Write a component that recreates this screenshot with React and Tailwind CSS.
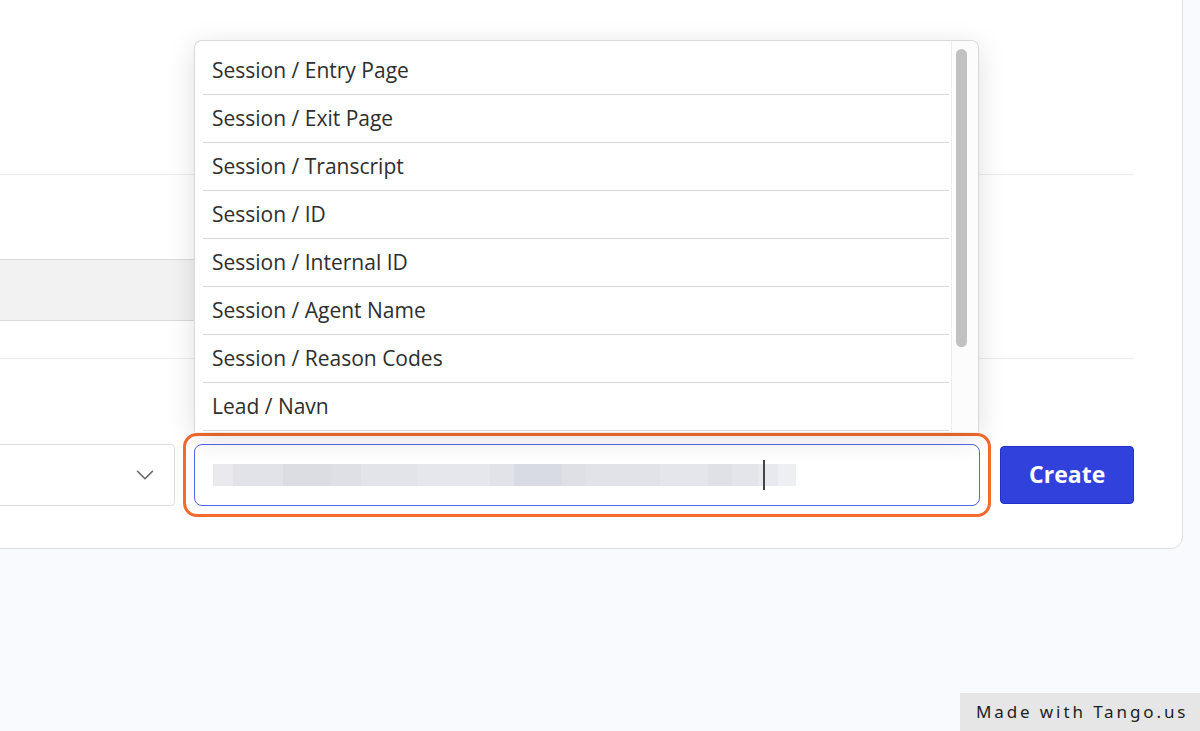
import { ChevronDown } from "lucide-react";

const OPTIONS = [
  "Session / Entry Page",
  "Session / Exit Page",
  "Session / Transcript",
  "Session / ID",
  "Session / Internal ID",
  "Session / Agent Name",
  "Session / Reason Codes",
  "Lead / Navn",
  "Lead / Telefon",
];

// blurred (redacted) text inside the focused input
const BLUR = [
  ["w-[20px]", "bg-[#eaeaee]"],
  ["w-[50px]", "bg-[#e2e3e8]"],
  ["w-[48px]", "bg-[#dcdde3]"],
  ["w-[30px]", "bg-[#dfe0e6]"],
  ["w-[56px]", "bg-[#e3e4ea]"],
  ["w-[73px]", "bg-[#e6e7ec]"],
  ["w-[24px]", "bg-[#e2e3e9]"],
  ["w-[48px]", "bg-[#d9dbe2]"],
  ["w-[24px]", "bg-[#dfe0e6]"],
  ["w-[74px]", "bg-[#e2e3e9]"],
  ["w-[48px]", "bg-[#e5e6eb]"],
  ["w-[24px]", "bg-[#e0e1e7]"],
  ["w-[26px]", "bg-[#e4e5ea]"],
  ["w-[20px]", "bg-[#e8e9ee]"],
  ["w-[18px]", "bg-[#eeeff3]"],
];

function Dropdown() {
  return (
    <div className="absolute left-[194px] top-[40px] flex h-[392px] w-[785px] overflow-hidden rounded-t-[8px] border border-b-0 border-[#d9d9dc] bg-white shadow-[0_6px_28px_rgba(0,0,0,0.13)]">
      <ul className="w-[754px] pl-[8px] pt-[6px]">
        {OPTIONS.map((o) => (
          <li key={o} className="flex h-[48px] items-center border-b border-[#d6d6d6] pl-[9px] text-[21px] text-[#2e2e2e]">
            {o}
          </li>
        ))}
      </ul>
      <div className="ml-[2px] flex-1 border-l border-[#ececec] bg-[#fcfcfc] pl-[4px] pt-[8px]">
        <div className="h-[298px] w-[11px] rounded-full bg-[#c1c1c1]" />
      </div>
    </div>
  );
}

export default function App() {
  return (
    <div
      className="relative h-[731px] w-[1200px] overflow-hidden bg-[#f9fafd]"
      style={{ fontFamily: '"Open Sans", "Noto Sans", sans-serif' }}
    >
      <div className="-ml-[40px] -mt-[40px] w-[1223px] rounded-br-[12px] border border-[#dedfe2] bg-white pl-[24px] pr-[48px]">
        <div className="h-[214px] border-b border-[#ececee]" />
        <div className="h-[184px] border-b border-[#ececee] pt-[84px]">
          <div className="h-[62px] w-[620px] border-y border-[#d9d9d9] bg-[#f2f2f3]" />
        </div>
        <div className="flex h-[189px] items-center gap-[19px] pb-[42px] pt-[84px]">
          <div className="flex h-[62px] w-[192px] items-center justify-end rounded-[4px] border border-[#dcdcdc] bg-white pr-[14px]">
            <ChevronDown className="h-[30px] w-[30px] text-[#666]" strokeWidth={1.3} />
          </div>
          <div className="-my-[11px] -mx-[11px] rounded-[14px] border-[3px] border-[#f56a2d] bg-white p-[8px]">
            <div className="flex h-[62px] w-[786px] items-center rounded-[8px] border-[1.5px] border-[#5566e8] bg-white pl-[18px]">
              <div className="relative flex h-[22px] blur-[0.6px]">
                {BLUR.map(([w, c], i) => (
                  <span key={i} className={`h-full ${w} ${c}`} />
                ))}
                <span className="absolute left-[550px] -top-[4px] h-[30px] w-[2px] bg-[#444]" />
              </div>
            </div>
          </div>
          <button
            type="button"
            className="ml-[1px] flex h-[58px] w-[135px] items-center justify-center rounded-[4px] border border-[#2231c9] bg-[#3142dc] text-[23px] font-bold text-white"
          >
            Create
          </button>
        </div>
      </div>

      <Dropdown />

      <div
        className="absolute bottom-0 right-0 flex h-[38px] w-[240px] items-center bg-[#e6e6e6] pl-[16px] text-[17px] tracking-[0.17em] text-[#1e1e1e]"
        style={{ fontFamily: '"Noto Sans", sans-serif' }}
      >
        Made with Tango.us
      </div>
    </div>
  );
}
